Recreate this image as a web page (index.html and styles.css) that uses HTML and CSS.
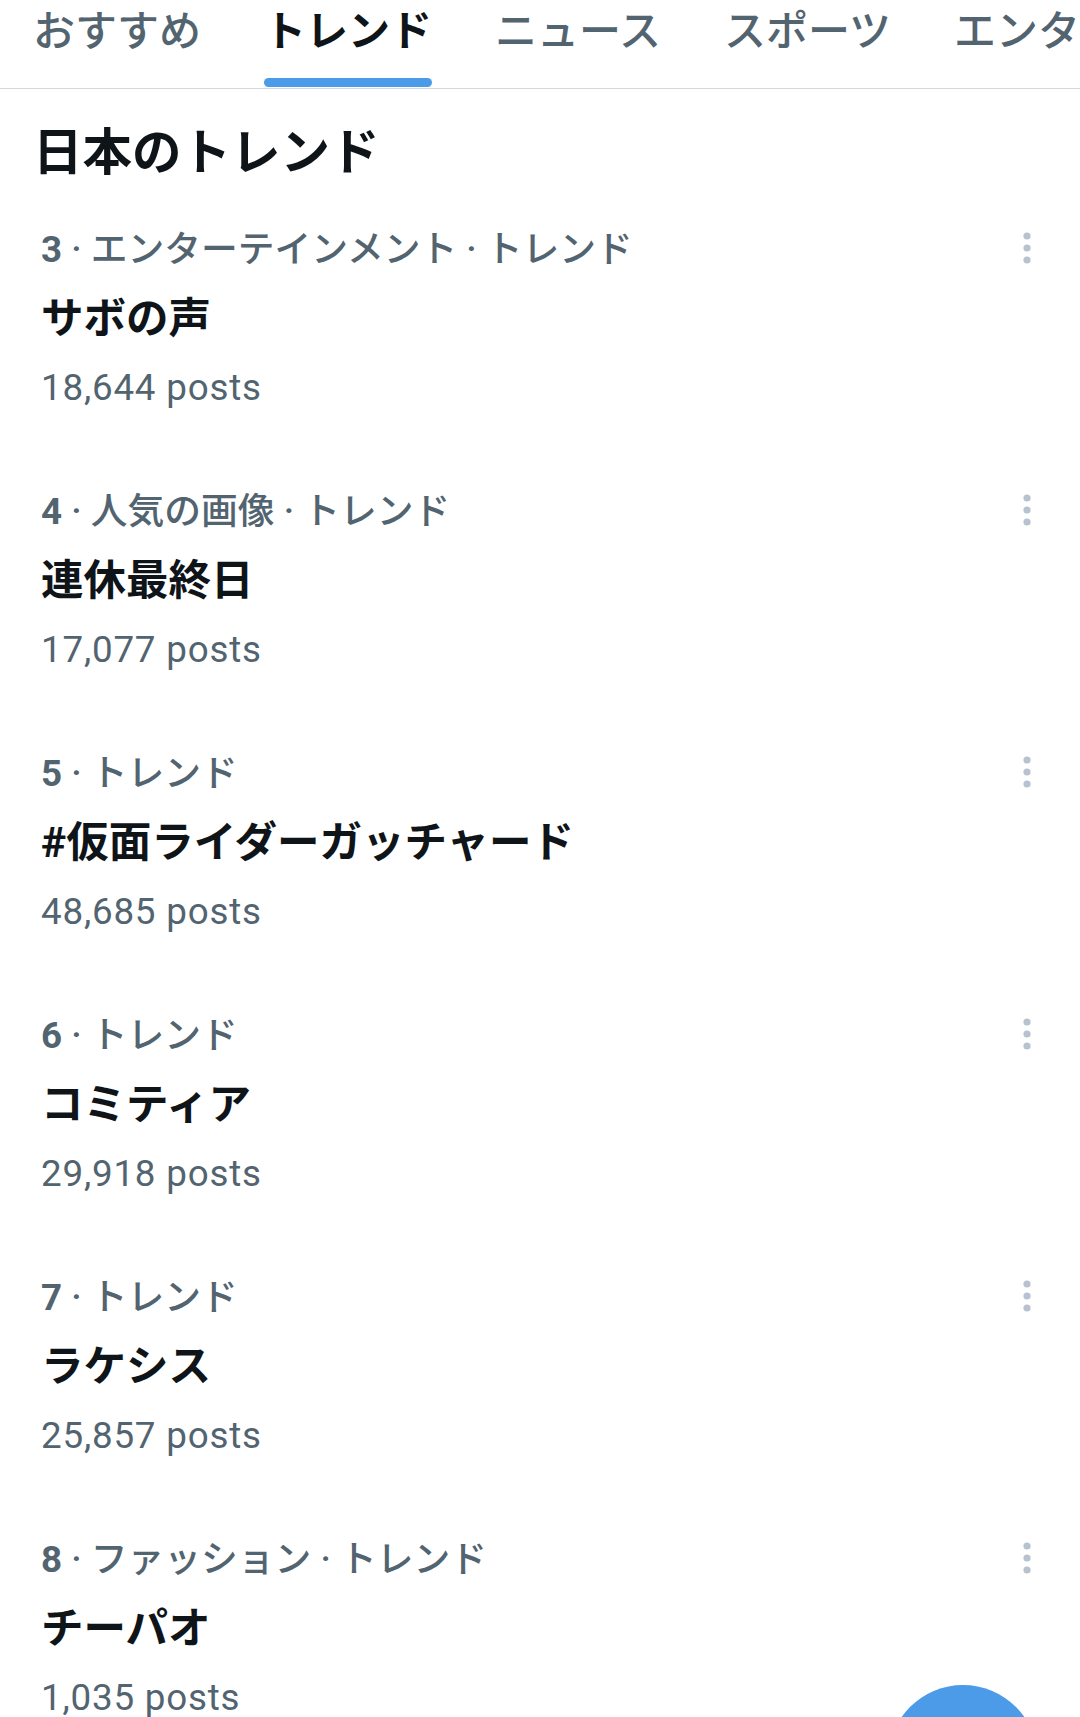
FILE: index.html
```html
<!DOCTYPE html>
<html lang="ja">
<head>
<meta charset="utf-8">
<title>トレンド</title>
<link rel="stylesheet" href="styles.css">
</head>
<body>
<nav class="tabs">
  <div class="tab"><span class="tab-label">おすすめ</span></div>
  <div class="tab tab-active"><span class="tab-label">トレンド</span><span class="tab-bar"></span></div>
  <div class="tab"><span class="tab-label">ニュース</span></div>
  <div class="tab"><span class="tab-label">スポーツ</span></div>
  <div class="tab"><span class="tab-label">エンタメ</span></div>
</nav>

<h1 class="section-title">日本のトレンド</h1>

<main class="trend-list">
  <div class="trend">
    <div class="trend-body">
      <div class="trend-meta"><b>3</b> · エンターテインメント · トレンド</div>
      <div class="trend-name">サボの声</div>
      <div class="trend-count">18,644 posts</div>
    </div>
    <svg class="more" width="40" height="52" viewBox="0 0 40 52"><circle cx="20" cy="12" r="3.6"/><circle cx="20" cy="24" r="3.6"/><circle cx="20" cy="36" r="3.6"/></svg>
  </div>
  <div class="trend">
    <div class="trend-body">
      <div class="trend-meta"><b>4</b> · 人気の画像 · トレンド</div>
      <div class="trend-name">連休最終日</div>
      <div class="trend-count">17,077 posts</div>
    </div>
    <svg class="more" width="40" height="52" viewBox="0 0 40 52"><circle cx="20" cy="12" r="3.6"/><circle cx="20" cy="24" r="3.6"/><circle cx="20" cy="36" r="3.6"/></svg>
  </div>
  <div class="trend">
    <div class="trend-body">
      <div class="trend-meta"><b>5</b> · トレンド</div>
      <div class="trend-name">#仮面ライダーガッチャード</div>
      <div class="trend-count">48,685 posts</div>
    </div>
    <svg class="more" width="40" height="52" viewBox="0 0 40 52"><circle cx="20" cy="12" r="3.6"/><circle cx="20" cy="24" r="3.6"/><circle cx="20" cy="36" r="3.6"/></svg>
  </div>
  <div class="trend">
    <div class="trend-body">
      <div class="trend-meta"><b>6</b> · トレンド</div>
      <div class="trend-name">コミティア</div>
      <div class="trend-count">29,918 posts</div>
    </div>
    <svg class="more" width="40" height="52" viewBox="0 0 40 52"><circle cx="20" cy="12" r="3.6"/><circle cx="20" cy="24" r="3.6"/><circle cx="20" cy="36" r="3.6"/></svg>
  </div>
  <div class="trend">
    <div class="trend-body">
      <div class="trend-meta"><b>7</b> · トレンド</div>
      <div class="trend-name">ラケシス</div>
      <div class="trend-count">25,857 posts</div>
    </div>
    <svg class="more" width="40" height="52" viewBox="0 0 40 52"><circle cx="20" cy="12" r="3.6"/><circle cx="20" cy="24" r="3.6"/><circle cx="20" cy="36" r="3.6"/></svg>
  </div>
  <div class="trend">
    <div class="trend-body">
      <div class="trend-meta"><b>8</b> · ファッション · トレンド</div>
      <div class="trend-name">チーパオ</div>
      <div class="trend-count">1,035 posts</div>
    </div>
    <svg class="more" width="40" height="52" viewBox="0 0 40 52"><circle cx="20" cy="12" r="3.6"/><circle cx="20" cy="24" r="3.6"/><circle cx="20" cy="36" r="3.6"/></svg>
  </div>
</main>

<button class="fab" aria-label="ポストする"></button>
</body>
</html>
```

FILE: styles.css
```css
html, body {
  margin: 0;
  padding: 0;
  background: #ffffff;
}

body {
  width: 1080px;
  height: 1717px;
  overflow: hidden;
  font-family: "Roboto", "Noto Sans CJK JP", sans-serif;
  color: #0f1419;
}

.tabs {
  display: flex;
  gap: 63px;
  padding-left: 33px;
  height: 88px;
  border-bottom: 1px solid #cfd9de;
  overflow: hidden;
  white-space: nowrap;
}

.tab {
  flex-shrink: 0;
  display: flex;
  flex-direction: column;
  font-family: "Noto Sans CJK JP", sans-serif;
  font-size: 42px;
  font-weight: 500;
  color: #536471;
}

.tab-label {
  display: block;
  line-height: 56px;
}

.tab-active {
  color: #0f1419;
  font-weight: 700;
}

.tab-bar {
  display: block;
  margin-top: 22px;
  height: 9px;
  border-radius: 5px;
  background: #4c9be8;
}

.section-title {
  margin: 0;
  padding: 28px 0 7px 33px;
  font-family: "Noto Sans CJK JP", sans-serif;
  font-size: 49.5px;
  font-weight: 700;
  line-height: 64px;
  color: #0f1419;
}

.trend-list {
  display: flex;
  flex-direction: column;
}

.trend {
  display: flex;
  align-items: flex-start;
  padding: 36px 33px 36px 41px;
}

.trend-body {
  flex: 1;
  min-width: 0;
}

.trend-meta {
  font-family: "Roboto", "Noto Sans CJK JP", sans-serif;
  font-size: 36.75px;
  font-weight: 500;
  line-height: 52px;
  height: 52px;
  color: #536471;
  white-space: nowrap;
}

.trend-meta b {
  font-weight: 700;
}

.trend-name {
  font-family: "Roboto", "Noto Sans CJK JP", sans-serif;
  font-size: 42.5px;
  font-weight: 700;
  line-height: 86px;
  height: 86px;
  color: #0f1419;
  white-space: nowrap;
}

.trend-count {
  font-family: "Roboto", sans-serif;
  font-size: 36.75px;
  letter-spacing: 0.8px;
  line-height: 52px;
  height: 52px;
  color: #536471;
}

.more {
  flex-shrink: 0;
  fill: #b6c3cf;
}

.fab {
  position: fixed;
  right: 42px;
  top: 1685px;
  width: 150px;
  height: 150px;
  border: none;
  padding: 0;
  border-radius: 50%;
  background: #4c9be8;
}
```
